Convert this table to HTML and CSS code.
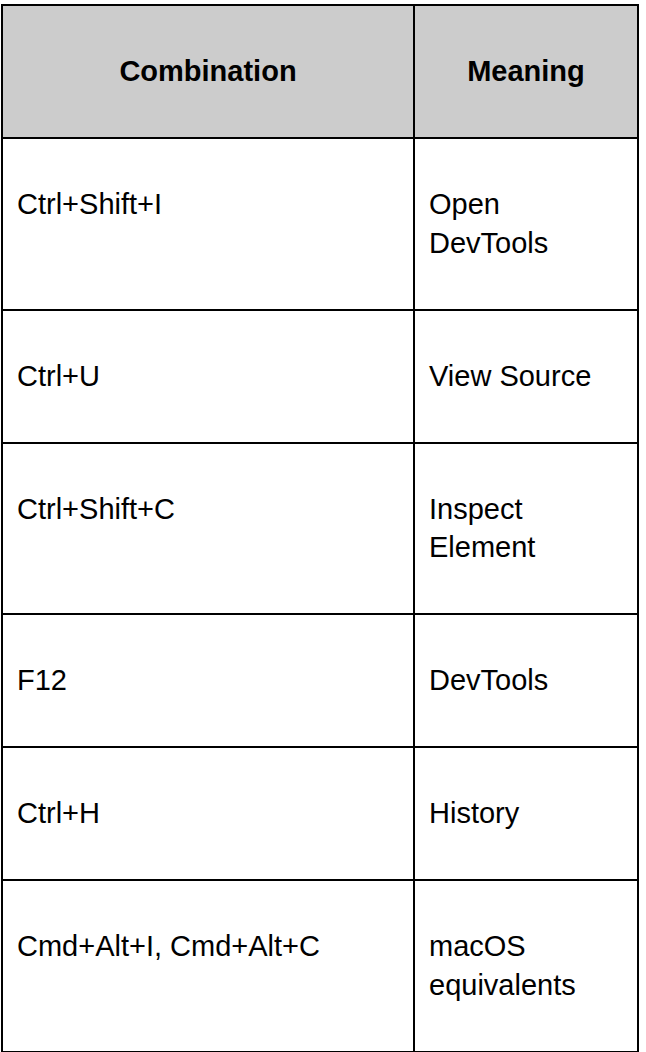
FILE: index.html
```html
<!DOCTYPE html>
<html lang="en">
<head>
<meta charset="utf-8">
<title>Shortcuts</title>
<link rel="stylesheet" href="styles.css">
</head>
<body>
<table class="keys">
  <thead>
    <tr>
      <th class="col-combo">Combination</th>
      <th class="col-meaning">Meaning</th>
    </tr>
  </thead>
  <tbody>
    <tr><td>Ctrl+Shift+I</td><td>Open DevTools</td></tr>
    <tr><td>Ctrl+U</td><td>View Source</td></tr>
    <tr><td>Ctrl+Shift+C</td><td>Inspect Element</td></tr>
    <tr><td>F12</td><td>DevTools</td></tr>
    <tr><td>Ctrl+H</td><td>History</td></tr>
    <tr><td>Cmd+Alt+I, Cmd+Alt+C</td><td>macOS equivalents</td></tr>
  </tbody>
</table>
</body>
</html>
```
FILE: styles.css
```css
html, body {
  margin: 0;
  padding: 0;
  background: #ffffff;
}

body {
  font-family: "Liberation Sans", Arial, Helvetica, sans-serif;
  color: #000000;
}

.keys {
  margin: 4px 0 0 1px;
  width: 638px;
  table-layout: fixed;
  border-collapse: separate;
  border-spacing: 0;
  border-top: 2px solid #000;
  border-left: 2px solid #000;
}

.keys th,
.keys td {
  box-sizing: border-box;
  border-right: 2px solid #000;
  border-bottom: 2px solid #000;
  padding: 46px 14px 46.5px 14px;
  font-size: 29px;
  line-height: 38.5px;
  vertical-align: top;
  text-align: left;
}

.keys th {
  background: #cccccc;
  font-weight: bold;
  text-align: center;
}

.col-combo {
  width: 412px;
}

.col-meaning {
  width: 224px;
}
```
